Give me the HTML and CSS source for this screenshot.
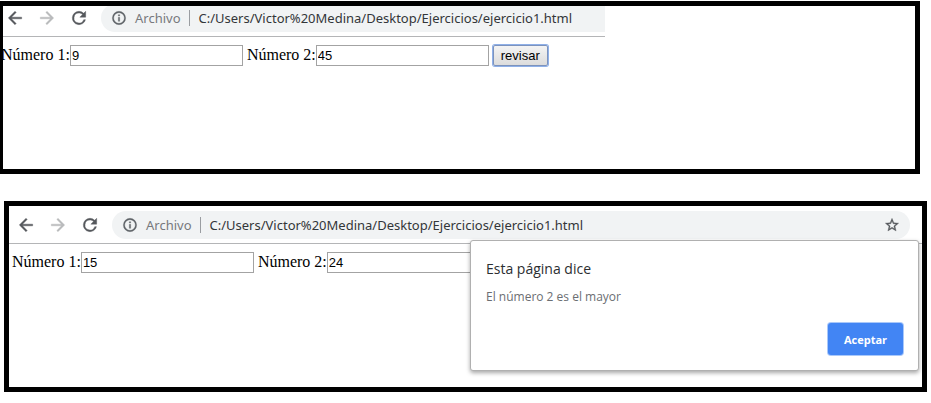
FILE: index.html
```html
<!DOCTYPE html>
<html lang="es">
<head>
<meta charset="utf-8">
<title>ejercicio1.html</title>
<link rel="stylesheet" href="styles.css">
</head>
<body>
<svg class="defs" aria-hidden="true">
  <symbol id="back" viewBox="0 0 24 24"><path d="M20 11H7.8l5.6-5.6L12 4l-8 8 8 8 1.4-1.4L7.8 13H20z"/></symbol>
  <symbol id="forward" viewBox="0 0 24 24"><path d="M4 11h12.2l-5.6-5.6L12 4l8 8-8 8-1.4-1.4 5.6-5.6H4z"/></symbol>
  <symbol id="reload" viewBox="0 0 24 24"><path d="M17.65 6.35A7.95 7.95 0 0 0 12 4a8 8 0 1 0 7.73 10h-2.08A6 6 0 1 1 12 6c1.66 0 3.14.69 4.22 1.78L13 11h7V4z"/></symbol>
  <symbol id="info" viewBox="0 0 24 24"><path d="M11 17h2v-6h-2zm1-15a10 10 0 1 0 0 20 10 10 0 0 0 0-20zm0 18a8 8 0 1 1 0-16 8 8 0 0 1 0 16zM11 9h2V7h-2z"/></symbol>
  <symbol id="star" viewBox="0 0 24 24"><path d="M22 9.24l-7.19-.62L12 2 9.19 8.63 2 9.24l5.46 4.73L5.82 21 12 17.27 18.18 21l-1.63-7.03zM12 15.4l-3.76 2.27 1-4.28-3.32-2.88 4.38-.38L12 6.1l1.71 4.04 4.38.38-3.32 2.88 1 4.28z"/></symbol>
</svg>

<section class="window window-first">
  <div class="toolbar">
    <button class="nav" type="button" aria-label="Atrás"><svg><use href="#back"/></svg></button>
    <button class="nav nav-off" type="button" aria-label="Adelante"><svg><use href="#forward"/></svg></button>
    <button class="nav" type="button" aria-label="Recargar"><svg><use href="#reload"/></svg></button>
    <div class="address">
      <svg class="info"><use href="#info"/></svg>
      <span class="scheme">Archivo</span>
      <span class="url">C:/Users/Victor%20Medina/Desktop/Ejercicios/ejercicio1.html</span>
    </div>
  </div>
  <form class="page">
    <label for="a1">Número 1:</label><input id="a1" type="text" value="9">
    <label for="a2">Número 2:</label><input id="a2" type="text" value="45">
    <button class="check" type="button">revisar</button>
  </form>
</section>

<section class="window window-second">
  <div class="toolbar">
    <button class="nav" type="button" aria-label="Atrás"><svg><use href="#back"/></svg></button>
    <button class="nav nav-off" type="button" aria-label="Adelante"><svg><use href="#forward"/></svg></button>
    <button class="nav" type="button" aria-label="Recargar"><svg><use href="#reload"/></svg></button>
    <div class="address">
      <svg class="info"><use href="#info"/></svg>
      <span class="scheme">Archivo</span>
      <span class="url">C:/Users/Victor%20Medina/Desktop/Ejercicios/ejercicio1.html</span>
      <button class="star" type="button" aria-label="Favorito"><svg><use href="#star"/></svg></button>
    </div>
  </div>
  <form class="page">
    <label for="b1">Número 1:</label><input id="b1" type="text" value="15">
    <label for="b2">Número 2:</label><input id="b2" type="text" value="24">
  </form>
  <div class="dialog" role="alertdialog" aria-labelledby="dt" aria-describedby="dm">
    <h2 id="dt">Esta página dice</h2>
    <p id="dm">El número 2 es el mayor</p>
    <button class="accept" type="button">Aceptar</button>
  </div>
</section>
</body>
</html>
```
FILE: styles.css
```css
* {
  box-sizing: border-box;
}

body {
  margin: 0;
  background: #fff;
  color: #000;
  font-family: "Liberation Serif", serif;
  font-size: 16px;
}

.defs {
  position: absolute;
  width: 0;
  height: 0;
}

button {
  padding: 0;
  border: 0;
  background: none;
}

svg {
  display: block;
  fill: currentColor;
  stroke: currentColor;
  stroke-width: 0.5;
}

.window {
  border: 5px solid #000;
}

.window-first {
  min-height: 173px;
  margin: 1px 11px 27px 0;
  border-left-width: 3px;
  overflow: hidden;
}

.window-second {
  position: relative;
  min-height: 191px;
  margin: 0 4px;
}

.toolbar {
  display: flex;
  align-items: center;
  gap: 8px;
  padding: 5px 12px 4px 5px;
  border-bottom: 1px solid #b4b5b7;
  font-family: "Noto Sans", "Open Sans", sans-serif;
  font-size: 13px;
}

.nav {
  display: grid;
  place-items: center;
  width: 24px;
  height: 24px;
  color: #55585c;
}

.nav svg {
  width: 20px;
  height: 20px;
}

.nav-off {
  color: #b9babc;
}

.address {
  display: flex;
  flex: 1;
  align-items: center;
  height: 28px;
  margin-left: 2px;
  padding: 0 10px;
  border-radius: 14px;
  background: #f1f3f4;
  white-space: nowrap;
}

.info {
  width: 16px;
  height: 16px;
  margin-right: 8px;
  color: #5f6368;
}

.scheme {
  padding-right: 8px;
  border-right: 1px solid #9a9da1;
  color: #77797d;
  line-height: 16px;
}

.url {
  padding-left: 9px;
  color: #333639;
}

.star {
  margin-left: auto;
  color: #55585c;
}

.star svg {
  width: 16px;
  height: 16px;
}

.window-first .toolbar {
  width: 66%;
  margin-top: -2px;
  padding: 0 0 4px;
}

.window-first .address {
  border-radius: 14px 0 0 14px;
}

.page {
  padding: 8px 3px;
}

.window-first .page {
  margin-left: -5px;
}

.page input {
  width: 173px;
  height: 21px;
  padding: 1px;
  border: 1px solid #a3a3a3;
  background: #fff;
  color: #000;
  font: 13px "Liberation Sans", sans-serif;
}

.check {
  height: 21px;
  padding: 0 7px;
  border: 1px solid #7c93bd;
  border-radius: 2px;
  background: linear-gradient(#f4f4f4, #dcdcdc);
  box-shadow: 0 0 0 1px #8fb0e8;
  color: #000;
  font: 13px "Liberation Sans", sans-serif;
}

.dialog {
  position: absolute;
  top: 34px;
  right: 3px;
  display: flex;
  flex-direction: column;
  width: 449px;
  padding: 15px;
  border: 1px solid #b0b0b0;
  border-radius: 3px;
  background: #fff;
  box-shadow: 0 2px 4px rgba(0, 0, 0, 0.35);
  font-family: "Open Sans", sans-serif;
}

.dialog h2 {
  margin: 0;
  color: #2b2e31;
  font-size: 14px;
  font-weight: 400;
  line-height: 26px;
}

.dialog p {
  margin: 5px 0 16px;
  color: #6b6e72;
  font-size: 12px;
  line-height: 20px;
}

.accept {
  align-self: flex-end;
  width: 75px;
  height: 32px;
  border-radius: 3px;
  background: #4285f4;
  box-shadow: 0 0 0 1px #a9c8fa;
  color: #fff;
  font: 700 11px "Open Sans", sans-serif;
}
```
